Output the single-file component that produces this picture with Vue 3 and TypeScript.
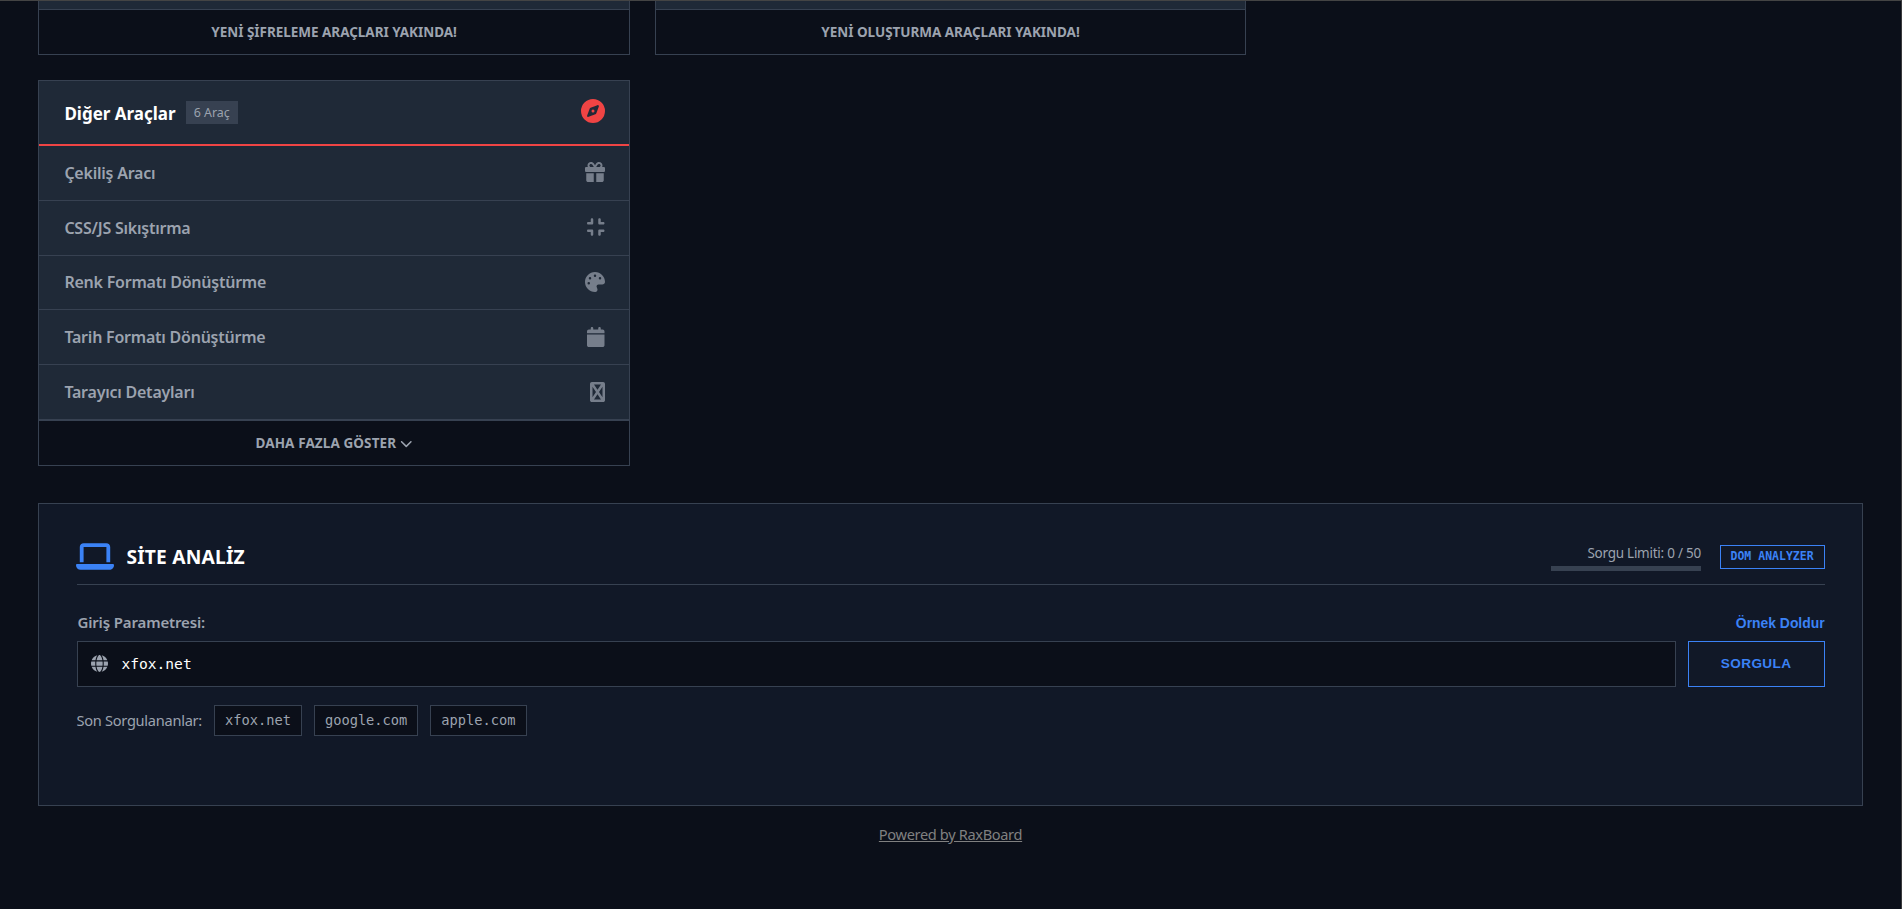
<script setup lang="ts">
import { ref } from 'vue';

interface Icon {
    box: string
    path: string
}

interface Tool {
    label: string
    icon: Icon
}

// glyphs, drawn on a 512 unit high grid
const icons: Record<string, Icon> = {
    compass: {
        box: '0 0 512 512',
        path: 'M256 512A256 256 0 1 0 256 0a256 256 0 1 0 0 512zm50.7-186.9L162.4 380.6c-19.4 7.5-38.5-11.6-31-31l55.5-144.3c3.3-8.5 9.9-15.1 18.4-18.4l144.3-55.5c19.4-7.5 38.5 11.6 31 31L325.1 306.7c-3.2 8.5-9.9 15.1-18.4 18.4zM288 256a32 32 0 1 0 -64 0 32 32 0 1 0 64 0z'
    },
    gift: {
        box: '0 0 512 512',
        path: 'M190.5 68.8L225.3 128H224 152c-22.1 0-40-17.9-40-40s17.9-40 40-40h2.2c14.9 0 28.8 7.9 36.3 20.8zM64 88c0 14.4 3.5 28 9.6 40H32c-17.7 0-32 14.3-32 32v64c0 17.7 14.3 32 32 32H480c17.7 0 32-14.3 32-32V160c0-17.7-14.3-32-32-32H438.4c6.1-12 9.6-25.6 9.6-40c0-48.6-39.4-88-88-88h-2.2c-31.9 0-61.5 16.9-77.7 44.4L256 85.5l-24.1-41C215.7 16.9 186.1 0 154.2 0H152C103.4 0 64 39.4 64 88zm336 0c0 22.1-17.9 40-40 40H288h-1.3l34.8-59.2C329.1 55.9 342.9 48 357.8 48H360c22.1 0 40 17.9 40 40zM32 288V464c0 26.5 21.5 48 48 48H224V288H32zM288 512H432c26.5 0 48-21.5 48-48V288H288V512z'
    },
    compress: {
        box: '0 0 448 512',
        path: 'M160 64c0-17.7-14.3-32-32-32s-32 14.3-32 32v64H32c-17.7 0-32 14.3-32 32s14.3 32 32 32h96c17.7 0 32-14.3 32-32V64zM32 320c-17.7 0-32 14.3-32 32s14.3 32 32 32H96v64c0 17.7 14.3 32 32 32s32-14.3 32-32V352c0-17.7-14.3-32-32-32H32zM352 64c0-17.7-14.3-32-32-32s-32 14.3-32 32v96c0 17.7 14.3 32 32 32h96c17.7 0 32-14.3 32-32s-14.3-32-32-32H352V64zM320 320c-17.7 0-32 14.3-32 32v96c0 17.7 14.3 32 32 32s32-14.3 32-32V384h64c17.7 0 32-14.3 32-32s-14.3-32-32-32H320z'
    },
    palette: {
        box: '0 0 512 512',
        path: 'M512 256c0 .9 0 1.8 0 2.7c-.4 36.5-33.6 61.3-70.1 61.3H344c-26.5 0-48 21.5-48 48c0 3.4 .4 6.7 1 9.9c2.1 10.2 6.5 20 10.8 29.9c6.1 13.8 12.1 27.5 12.1 42c0 31.8-21.6 60.7-53.4 62c-3.5 .1-7 .2-10.6 .2C114.6 512 0 397.4 0 256S114.6 0 256 0S512 114.6 512 256zM128 288a32 32 0 1 0 -64 0 32 32 0 1 0 64 0zm0-96a32 32 0 1 0 0-64 32 32 0 1 0 0 64zM288 96a32 32 0 1 0 -64 0 32 32 0 1 0 64 0zm96 96a32 32 0 1 0 0-64 32 32 0 1 0 0 64z'
    },
    calendar: {
        box: '0 0 448 512',
        path: 'M96 32V64H48C21.5 64 0 85.5 0 112v48H448V112c0-26.5-21.5-48-48-48H352V32c0-17.7-14.3-32-32-32s-32 14.3-32 32V64H160V32c0-17.7-14.3-32-32-32S96 14.3 96 32zM448 192H0V464c0 26.5 21.5 48 48 48H400c26.5 0 48-21.5 48-48V192z'
    },
    crossed: {
        box: '0 0 384 512',
        path: 'M64 390.3L153.5 256 64 121.7V390.3zM102.5 448H281.5L192 313.7 102.5 448zm128-192L320 390.3V121.7L230.5 256zM281.5 64H102.5L192 198.3 281.5 64zM0 48C0 21.5 21.5 0 48 0H336c26.5 0 48 21.5 48 48V464c0 26.5-21.5 48-48 48H48c-26.5 0-48-21.5-48-48V48z'
    },
    chevron: {
        box: '0 0 512 512',
        path: 'M233.4 406.6c12.5 12.5 32.8 12.5 45.3 0l192-192c12.5-12.5 12.5-32.8 0-45.3s-32.8-12.5-45.3 0L256 338.7 86.6 169.4c-12.5-12.5-32.8-12.5-45.3 0s-12.5 32.8 0 45.3l192 192z'
    },
    laptop: {
        box: '0 0 640 512',
        path: 'M128 32C92.7 32 64 60.7 64 96V352h64V96H512V352h64V96c0-35.3-28.7-64-64-64H128zM19.2 384C8.6 384 0 392.6 0 403.2C0 445.6 34.4 480 76.8 480H563.2c42.4 0 76.8-34.4 76.8-76.8c0-10.6-8.6-19.2-19.2-19.2H19.2z'
    },
    globe: {
        box: '0 0 512 512',
        path: 'M352 256c0 22.2-1.2 43.6-3.3 64H163.3c-2.2-20.4-3.3-41.8-3.3-64s1.2-43.6 3.3-64H348.7c2.2 20.4 3.3 41.8 3.3 64zm28.8-64H503.9c5.3 20.5 8.1 41.9 8.1 64s-2.8 43.5-8.1 64H380.8c2.1-20.6 3.2-42 3.2-64s-1.1-43.4-3.2-64zm112.6-32H376.7c-10-63.9-29.8-117.4-55.3-151.6c78.3 20.7 142 77.5 171.9 151.6zm-149.1 0H167.7c6.1-36.4 15.5-68.6 27-94.7c10.5-23.6 22.2-40.7 33.5-51.5C239.4 3.2 248.7 0 256 0s16.6 3.2 27.8 13.8c11.3 10.8 23 27.9 33.5 51.5c11.6 26 20.9 58.2 27 94.7zm-209 0H18.6C48.6 85.9 112.2 29.1 190.6 8.4C165.1 42.6 145.3 96.1 135.3 160zM8.1 192H131.2c-2.1 20.6-3.2 42-3.2 64s1.1 43.4 3.2 64H8.1C2.8 299.5 0 278.1 0 256s2.8-43.5 8.1-64zM194.7 446.6c-11.6-26-20.9-58.2-27-94.6H344.3c-6.1 36.4-15.5 68.6-27 94.6c-10.5 23.6-22.2 40.7-33.5 51.5C272.6 508.8 263.3 512 256 512s-16.6-3.2-27.8-13.8c-11.3-10.8-23-27.9-33.5-51.5zM135.3 352c10 63.9 29.8 117.4 55.3 151.6C112.2 482.9 48.6 426.1 18.6 352H135.3zm358.1 0c-30 74.1-93.6 130.9-171.9 151.6c25.5-34.2 45.2-87.7 55.3-151.6H493.4z'
    }
};

const closedCards = [
    'YENİ ŞİFRELEME ARAÇLARI YAKINDA!',
    'YENİ OLUŞTURMA ARAÇLARI YAKINDA!'
];

const tools: Tool[] = [
    { label: 'Çekiliş Aracı', icon: icons.gift },
    { label: 'CSS/JS Sıkıştırma', icon: icons.compress },
    { label: 'Renk Formatı Dönüştürme', icon: icons.palette },
    { label: 'Tarih Formatı Dönüştürme', icon: icons.calendar },
    { label: 'Tarayıcı Detayları', icon: icons.crossed }
];

const recent = ['xfox.net', 'google.com', 'apple.com'];
const query = ref('xfox.net');
const used = ref(0);
const limit = 50;
</script>

<template>
    <div class="page">
        <div class="grid">
            <section v-for="text in closedCards" :key="text" class="card card-cut">
                <div class="card-rest"></div>
                <div class="card-footer">{{ text }}</div>
            </section>
            <section class="card card-other">
                <header class="card-header">
                    <h2 class="card-title">Diğer Araçlar</h2>
                    <span class="count">6 Araç</span>
                    <svg class="header-icon" :viewBox="icons.compass.box"><path :d="icons.compass.path" /></svg>
                </header>
                <a v-for="tool in tools" :key="tool.label" class="tool">
                    <span>{{ tool.label }}</span>
                    <svg class="tool-icon" :viewBox="tool.icon.box"><path :d="tool.icon.path" /></svg>
                </a>
                <div class="card-footer more">
                    <span>DAHA FAZLA GÖSTER</span>
                    <svg class="chevron" :viewBox="icons.chevron.box"><path :d="icons.chevron.path" /></svg>
                </div>
            </section>
        </div>

        <section class="panel">
            <header class="panel-header">
                <svg class="laptop" :viewBox="icons.laptop.box"><path :d="icons.laptop.path" /></svg>
                <h1 class="panel-title">SİTE ANALİZ</h1>
                <div class="limit">
                    <span class="limit-text">Sorgu Limiti: {{ used }} / {{ limit }}</span>
                    <div class="bar"><div class="bar-fill" :style="{ width: (used / limit) * 100 + '%' }"></div></div>
                </div>
                <span class="badge">DOM ANALYZER</span>
            </header>
            <div class="label-row">
                <label for="query">Giriş Parametresi:</label>
                <button type="button" class="fill">Örnek Doldur</button>
            </div>
            <div class="query-row">
                <div class="field">
                    <svg class="globe" :viewBox="icons.globe.box"><path :d="icons.globe.path" /></svg>
                    <input id="query" v-model="query" type="text" spellcheck="false">
                </div>
                <button type="button" class="submit">SORGULA</button>
            </div>
            <div class="recent">
                <span class="recent-label">Son Sorgulananlar:</span>
                <button v-for="site in recent" :key="site" type="button" class="chip" @click="query = site">{{ site }}</button>
            </div>
        </section>

        <footer class="footer"><a class="powered">Powered by RaxBoard</a></footer>
    </div>
</template>

<style>
body {
    background: #0b0f19;
}
</style>

<style scoped>
.page {
    box-sizing: border-box;
    height: 909px;
    overflow: hidden;
    padding: 0 38.4px;
    border-top: 1px solid #444444;
    border-right: 1px solid #3a3a3c;
    background: #0b0f19;
    color: #9ca3af;
    font-family: "Segoe UI", "Noto Sans", sans-serif;
}

svg {
    display: block;
    flex: none;
    fill: currentColor;
}

h1,
h2 {
    margin: 0;
}

.grid {
    display: grid;
    grid-template-columns: repeat(3, 1fr);
    gap: 25px;
    align-items: start;
}

.card {
    box-sizing: border-box;
    border: 1px solid #374151;
    background: #1f2937;
}

.card-cut {
    border-top: 0;
}

.card-other {
    grid-column: 1;
}

.card-rest {
    height: 8px;
}

.card-footer {
    display: flex;
    align-items: center;
    justify-content: center;
    box-sizing: border-box;
    height: 45px;
    border-top: 1px solid #374151;
    background: #0b0f19;
    font-size: 13.5px;
    font-weight: 700;
    letter-spacing: -0.03px;
}

.card-header {
    display: flex;
    align-items: center;
    box-sizing: border-box;
    height: 65px;
    padding: 0 24px 0 25px;
    border-bottom: 2px solid #ef4444;
}

.card-title {
    padding-top: 2px;
    color: #ffffff;
    font-size: 17px;
    font-weight: 700;
}

.count {
    margin-left: 10px;
    padding: 0 8px;
    background: #374151;
    font-size: 12.4px;
    line-height: 23px;
}

.header-icon {
    width: 24px;
    height: 24px;
    margin: 0 0 3px auto;
    color: #ef4444;
}

.tool {
    display: flex;
    align-items: center;
    justify-content: space-between;
    box-sizing: border-box;
    height: 54.8px;
    padding: 0 24px 0 25px;
    border-bottom: 1px solid #374151;
    font-size: 16px;
    font-weight: 600;
    letter-spacing: -0.23px;
}

.tool-icon {
    height: 20px;
    margin-bottom: 1px;
    opacity: 0.7;
}

.more {
    gap: 4px;
    letter-spacing: 0.1px;
}

.chevron {
    width: 12.5px;
    height: 12.5px;
}

.panel {
    box-sizing: border-box;
    height: 303px;
    margin-top: 37px;
    padding: 37px 37px 0 38px;
    border: 1px solid #374151;
    background: #111827;
}

.panel-header {
    display: flex;
    align-items: center;
    box-sizing: border-box;
    height: 44px;
    padding-bottom: 11px;
    border-bottom: 1px solid #374151;
}

.laptop {
    width: 38px;
    height: 31px;
    margin-left: -1px;
    color: #3b82f6;
}

.panel-title {
    margin-left: 12px;
    color: #ffffff;
    font-size: 19.2px;
    font-weight: 700;
    letter-spacing: 0.2px;
}

.limit {
    display: flex;
    flex-direction: column;
    align-items: flex-end;
    gap: 3px;
    width: 150px;
    margin-left: auto;
}

.limit-text {
    font-size: 13.5px;
    line-height: 20px;
    letter-spacing: -0.25px;
    white-space: nowrap;
}

.bar {
    width: 100%;
    height: 5px;
    background: #374151;
}

.bar-fill {
    height: 100%;
    background: #3b82f6;
}

.badge {
    box-sizing: border-box;
    height: 24px;
    margin-left: 18.6px;
    padding: 0 10px;
    border: 1px solid #3b82f6;
    color: #3b82f6;
    font-family: Consolas, "DejaVu Sans Mono", monospace;
    font-size: 11.5px;
    font-weight: 700;
    line-height: 21px;
}

.label-row {
    display: flex;
    align-items: center;
    justify-content: space-between;
    height: 24px;
    margin: 25px 0 7px;
    font-size: 15px;
    font-weight: 600;
    letter-spacing: -0.14px;
}

.fill {
    padding: 2px 0 0;
    border: 0;
    background: none;
    color: #3b82f6;
    font-family: Arial, "Liberation Sans", sans-serif;
    font-size: 13.9px;
    font-weight: 600;
}

.query-row {
    display: flex;
    gap: 12px;
    height: 46px;
}

.field {
    display: flex;
    flex: 1;
    align-items: center;
    gap: 13px;
    padding: 0 13px;
    border: 1px solid #374151;
    background: #0b0f19;
}

.globe {
    width: 17px;
    height: 17px;
}

.field input {
    flex: 1;
    padding: 0;
    border: 0;
    outline: 0;
    background: none;
    color: #ffffff;
    font-family: Consolas, "DejaVu Sans Mono", monospace;
    font-size: 14.6px;
}

.submit {
    width: 137px;
    padding: 0;
    border: 1px solid #3b82f6;
    background: none;
    color: #3b82f6;
    font-family: Arial, "Liberation Sans", sans-serif;
    font-size: 13.6px;
    font-weight: 700;
    letter-spacing: 0.4px;
}

.recent {
    display: flex;
    align-items: center;
    gap: 12px;
    margin-top: 18px;
}

.recent-label {
    margin-left: -1px;
    font-size: 14.6px;
    letter-spacing: -0.27px;
}

.chip {
    height: 31px;
    padding: 0 10px;
    border: 1px solid #374151;
    background: #0b0f19;
    color: #9ca3af;
    font-family: Consolas, "DejaVu Sans Mono", monospace;
    font-size: 13.7px;
}

.footer {
    margin-top: 18px;
    text-align: center;
    font-size: 14.6px;
    letter-spacing: -0.35px;
}

.powered {
    color: #808080;
    text-decoration: underline;
}
</style>
